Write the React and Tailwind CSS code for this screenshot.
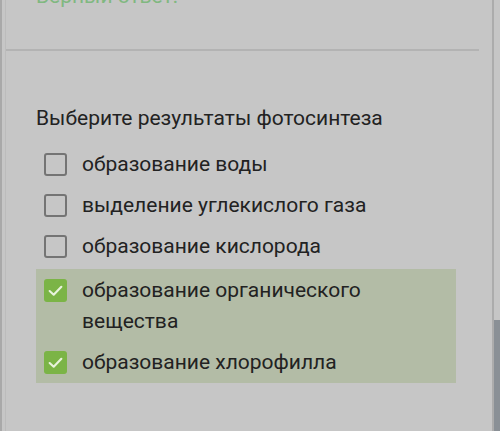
import React from "react";

const options = [
  { text: "образование воды", checked: false },
  { text: "выделение углекислого газа", checked: false },
  { text: "образование кислорода", checked: false },
  { text: "образование органического вещества", checked: true },
  { text: "образование хлорофилла", checked: true },
];

function Box({ checked }) {
  if (checked) {
    return (
      <div className="w-[23px] h-[23px] rounded-[3px] bg-[#7bb446] flex items-center justify-center">
        <svg width="17" height="17" viewBox="0 0 16 16" fill="none">
          <path d="M2.5 8.5 L6.3 12 L13.5 4.5" stroke="#e8f3dc" strokeWidth="2" strokeLinecap="round" strokeLinejoin="round" />
        </svg>
      </div>
    );
  }
  return <div className="w-[23px] h-[23px] rounded-[3px] border-[2.5px] border-[#747474]" />;
}

export default function App() {
  return (
    <div
      className="flex w-[500px] h-[431px] bg-[#c6c6c6] overflow-hidden text-[#222] border-l-2 border-[#a9a9a9]"
      style={{ fontFamily: "Roboto, 'Noto Sans', sans-serif" }}
    >
      <div className="w-[4px] shrink-0 border-r border-[#bcbcbc]" />
      <div className="flex-1 flex flex-col">
        <div className="h-[49px] pl-[30px] pr-[12px] flex items-start overflow-hidden">
          <div className="-mt-[16px] text-[21px] leading-[24px] text-[#80b880]">Верный ответ:</div>
        </div>
        <div className="h-[2px] bg-[#b3b3b3] mr-[13px]" />
        <div className="pl-[30px] pr-[36px]">
          <div className="mt-[55px] text-[21px] leading-[24px]">Выберите результаты фотосинтеза</div>
          <div className="mt-[14px] flex flex-col">
            {options.map((o, i) => (
              <div
                key={i}
                className={
                  "flex items-start pl-[8px] py-[5px] " +
                  (o.checked ? "bg-[#b3bca6]" : "") +
                  (i === 3 ? " mt-[2px] pt-[6px]" : "")
                }
              >
                <div className="h-[31px] flex items-center shrink-0">
                  <Box checked={o.checked} />
                </div>
                <div className="ml-[15px] text-[21px] leading-[31px] pr-[50px]">{o.text}</div>
              </div>
            ))}
          </div>
        </div>
      </div>
      <div className="w-[8px] shrink-0 border-l-2 border-[#acacac] flex flex-col">
        <div className="h-[320px]" />
        <div className="flex-1 bg-[#8a9096]" />
      </div>
    </div>
  );
}
